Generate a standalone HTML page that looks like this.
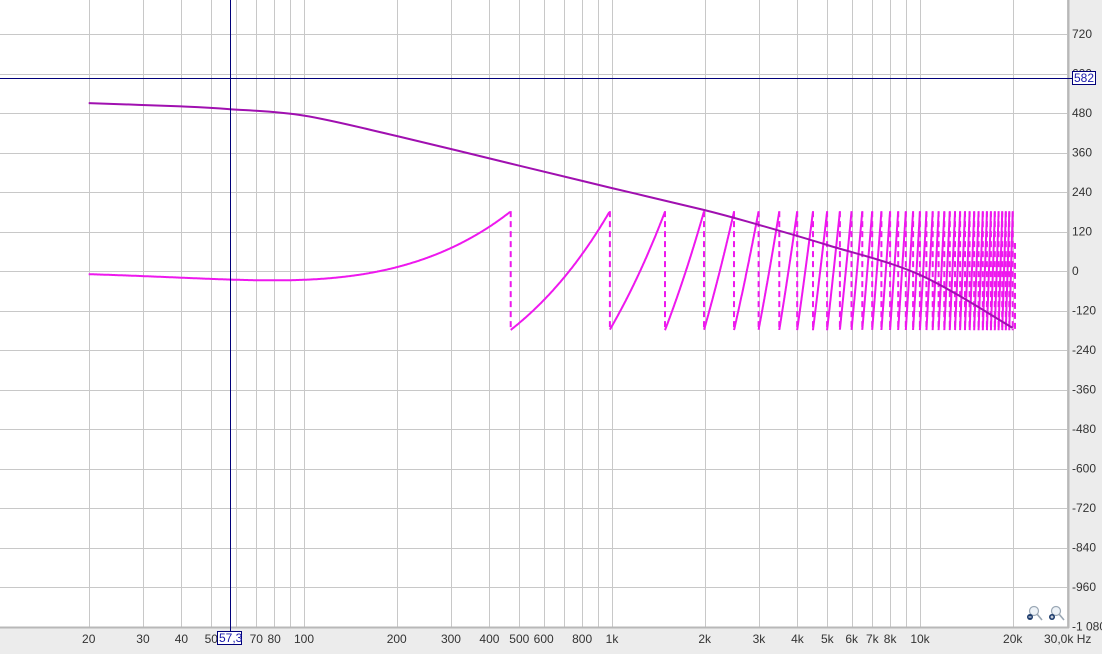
<!DOCTYPE html>
<html><head><meta charset="utf-8"><style>
html,body{margin:0;padding:0;background:#fff;}
body{width:1102px;height:654px;overflow:hidden;position:relative;font-family:"Liberation Sans",sans-serif;}
svg{position:absolute;left:0;top:0;}
</style></head><body>
<svg id="s" width="1102" height="654" xmlns="http://www.w3.org/2000/svg" font-family="Liberation Sans, sans-serif" font-size="12">
<rect x="0" y="0" width="1102" height="654" fill="#fff"/>
<g id="grid" stroke="#c8c8c8" stroke-width="1"></g>
<g id="curves"></g>
<rect x="1068" y="0" width="34" height="654" fill="#ececec"/>
<line x1="1068.5" y1="0" x2="1068.5" y2="628" stroke="#b8b8b8" stroke-width="2"/>
<rect x="0" y="628" width="1102" height="26" fill="#ececec"/>
<line x1="0" y1="627.5" x2="1069" y2="627.5" stroke="#b8b8b8" stroke-width="2"/>
<g id="ylab" fill="#333"></g>
<g id="xlab" fill="#333"></g>
<line x1="230.5" y1="0" x2="230.5" y2="631" stroke="#00007a" stroke-width="1"/>
<line x1="0" y1="78.5" x2="1072" y2="78.5" stroke="#00007a" stroke-width="1"/>
<rect x="1072.5" y="71.5" width="23" height="13" fill="#fff" stroke="#00007a"/>
<text x="1074" y="82" fill="#1a1aaa">582</text>
<rect x="217.5" y="631.5" width="24" height="13" fill="#fff" stroke="#00007a"/>
<text x="219" y="642" fill="#1a1aaa">57,3</text>
<g transform="translate(1026,605)">
<circle cx="8" cy="6" r="4.5" fill="#eef3f8" stroke="#9aa7b4" stroke-width="1.2"/>
<line x1="11" y1="9" x2="16" y2="15" stroke="#9aa7b4" stroke-width="1.6"/>
<circle cx="4" cy="12" r="3" fill="#1b3a6b"/><line x1="2.5" y1="12" x2="5.5" y2="12" stroke="#fff"/>
</g>
<g transform="translate(1048,605)">
<circle cx="8" cy="6" r="4.5" fill="#eef3f8" stroke="#9aa7b4" stroke-width="1.2"/>
<line x1="11" y1="9" x2="16" y2="15" stroke="#9aa7b4" stroke-width="1.6"/>
<circle cx="4" cy="12" r="3" fill="#1b3a6b"/><line x1="2.5" y1="12" x2="5.5" y2="12" stroke="#fff"/><line x1="4" y1="10.5" x2="4" y2="13.5" stroke="#fff"/>
</g>
</svg>
<script>
var NS="http://www.w3.org/2000/svg";
function X(f){return 304+308*(Math.log10(f)-2);}
function Y(d){return 271-d*(39.5/120);}
function el(t,a,p){var e=document.createElementNS(NS,t);for(var k in a)e.setAttribute(k,a[k]);if(p)p.appendChild(e);return e;}
var grid=document.getElementById('grid');
for(var d=-1080;d<=840;d+=120){var y=Math.round(Y(d))+0.5;el('line',{x1:0,x2:1068,y1:y,y2:y},grid);}
var fs=[];
[10,100,1000,10000].forEach(function(dec){for(var m=1;m<10;m++){var f=dec*m;if(f>=20&&f<=30000)fs.push(f);}});
fs.push(30000);
fs.forEach(function(f){var x=Math.round(X(f))+0.5;el('line',{x1:x,x2:x,y1:0,y2:627},grid);});
var yl=document.getElementById('ylab');
for(var d=-1080;d<=720;d+=120){if(d==600)continue;var t=el('text',{x:1072,y:Y(d)+4},yl);t.textContent=(d==-1080?'-1 080':String(d));}
var up=el('text',{x:1072,y:Y(600)+4},yl);up.textContent='600';
var xl=document.getElementById('xlab');
var labs=[[20,'20'],[30,'30'],[40,'40'],[50,'50'],[70,'70'],[80,'80'],[100,'100'],[200,'200'],[300,'300'],[400,'400'],[500,'500'],[600,'600'],[800,'800'],[1000,'1k'],[2000,'2k'],[3000,'3k'],[4000,'4k'],[5000,'5k'],[6000,'6k'],[7000,'7k'],[8000,'8k'],[10000,'10k'],[20000,'20k']];
labs.forEach(function(l){var t=el('text',{x:X(l[0]),y:643,'text-anchor':'middle'},xl);t.textContent=l[1];});
var t=el('text',{x:1044,y:643},xl);t.textContent='30,0k Hz';
var cv=document.getElementById('curves');
function ph(f){return 360*f/500-2*Math.atan(f/80)*180/Math.PI+4;}
var samples=[];
for(var lf=Math.log10(20);lf<Math.log10(1000);lf+=0.002)samples.push(Math.pow(10,lf));
for(var f=1000;f<=20000;f+=2)samples.push(f);
var segs=[],cur=[],prevK=null,dash=[];
samples.forEach(function(f){var p=ph(f);var k=Math.floor((p+180)/360);var w=p-360*k;
 if(prevK!==null&&k!==prevK){var x=X(f).toFixed(1);dash.push(x);segs.push(cur);cur=[];}
 prevK=k;cur.push(X(f).toFixed(1)+','+Y(w).toFixed(1));});
segs.push(cur);
var dstr='';segs.forEach(function(s){if(s.length)dstr+='M'+s.join('L');});
var dd='';dash.forEach(function(x){dd+='M'+x+','+Y(182).toFixed(1)+'L'+x+','+Y(-176).toFixed(1);});
dd+='M1015,'+Y(-176).toFixed(1)+'L1015,'+Y(85).toFixed(1);
el('path',{d:dd,stroke:'#ee18ee','stroke-width':2,fill:'none','stroke-dasharray':'6,4'},cv);
el('path',{d:dstr,stroke:'#ee18ee','stroke-width':2,fill:'none','stroke-linejoin':'round'},cv);
var P=[[20,510],[40,500],[57,492],[100,472],[200,410],[500,320],[1000,252],[2000,185],[3000,140],[5000,79],[10000,-12],[20000,-173]];
var pts=P.map(function(p){return [X(p[0]),Y(p[1])];});
var pd='M'+pts[0][0]+','+pts[0][1];
for(var i=0;i<pts.length-1;i++){var p0=pts[Math.max(0,i-1)],p1=pts[i],p2=pts[i+1],p3=pts[Math.min(pts.length-1,i+2)];
 pd+='C'+(p1[0]+(p2[0]-p0[0])/6).toFixed(1)+','+(p1[1]+(p2[1]-p0[1])/6).toFixed(1)+' '+(p2[0]-(p3[0]-p1[0])/6).toFixed(1)+','+(p2[1]-(p3[1]-p1[1])/6).toFixed(1)+' '+p2[0].toFixed(1)+','+p2[1].toFixed(1);}
el('path',{d:pd,stroke:'#a010b0','stroke-width':2,fill:'none'},cv);
</script>
</body></html>
